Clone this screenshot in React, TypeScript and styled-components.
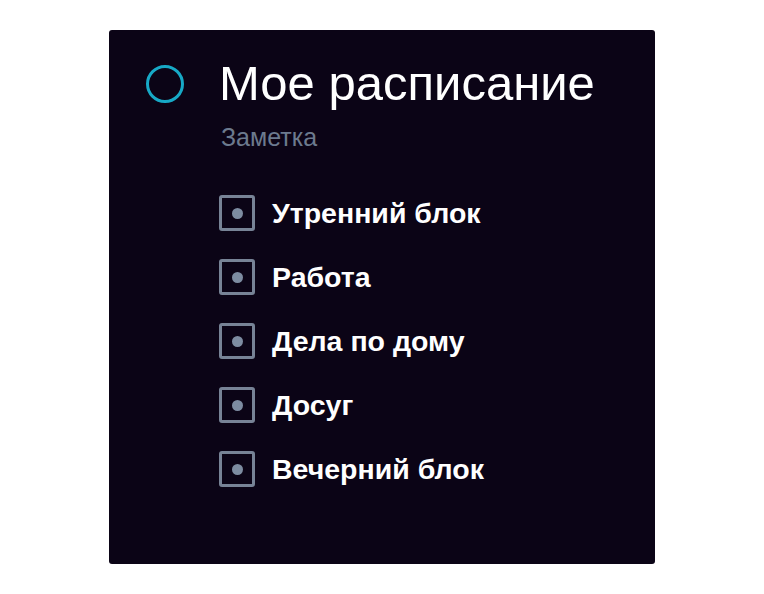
import React from "react";
import styled, { createGlobalStyle } from "styled-components";

const Global = createGlobalStyle`
  html, body { margin: 0; padding: 0; background: #ffffff; }
  body { font-family: "Liberation Sans", Arial, Helvetica, sans-serif; }
`;

const Page = styled.div`
  min-height: 100vh;
  display: flex;
  align-items: center;
  justify-content: center;
`;

const Card = styled.section`
  width: 546px;
  height: 534px;
  box-sizing: border-box;
  background: #0b0416;
  border-radius: 3px;
  padding: 35px 37px;
  display: flex;
  align-items: flex-start;
  gap: 35px;
`;

const Ring = styled.div`
  width: 38px;
  height: 38px;
  box-sizing: border-box;
  border: 3.5px solid #17a9c6;
  border-radius: 50%;
  flex: none;
`;

const Body = styled.div`
  display: flex;
  flex-direction: column;
`;

const Title = styled.h1`
  margin: -10px 0 0 0;
  font-size: 49px;
  font-weight: 400;
  line-height: 56px;
  color: #ffffff;
`;

const Subtitle = styled.div`
  margin: 12px 0 0 2px;
  font-size: 25px;
  line-height: 28px;
  color: #6c7a8e;
`;

const List = styled.ul`
  list-style: none;
  margin: 44px 0 0 0;
  padding: 0;
  display: flex;
  flex-direction: column;
  gap: 28px;
`;

const Item = styled.li`
  display: flex;
  align-items: center;
  gap: 17px;
  height: 36px;
`;

const Box = styled.span`
  width: 36px;
  height: 36px;
  box-sizing: border-box;
  border: 3px solid #778396;
  border-radius: 3px;
  display: flex;
  align-items: center;
  justify-content: center;
  flex: none;
`;

const Dot = styled.span`
  width: 11px;
  height: 11px;
  border-radius: 50%;
  background: #7d8ca1;
`;

const Label = styled.span`
  font-size: 28.5px;
  font-weight: 700;
  color: #ffffff;
  line-height: 32px;
`;

const items = ["Утренний блок", "Работа", "Дела по дому", "Досуг", "Вечерний блок"];

export default function App() {
  return (
    <>
      <Global />
      <Page>
        <Card>
          <Ring />
          <Body>
            <Title>Мое расписание</Title>
            <Subtitle>Заметка</Subtitle>
            <List>
              {items.map((t) => (
                <Item key={t}>
                  <Box>
                    <Dot />
                  </Box>
                  <Label>{t}</Label>
                </Item>
              ))}
            </List>
          </Body>
        </Card>
      </Page>
    </>
  );
}
